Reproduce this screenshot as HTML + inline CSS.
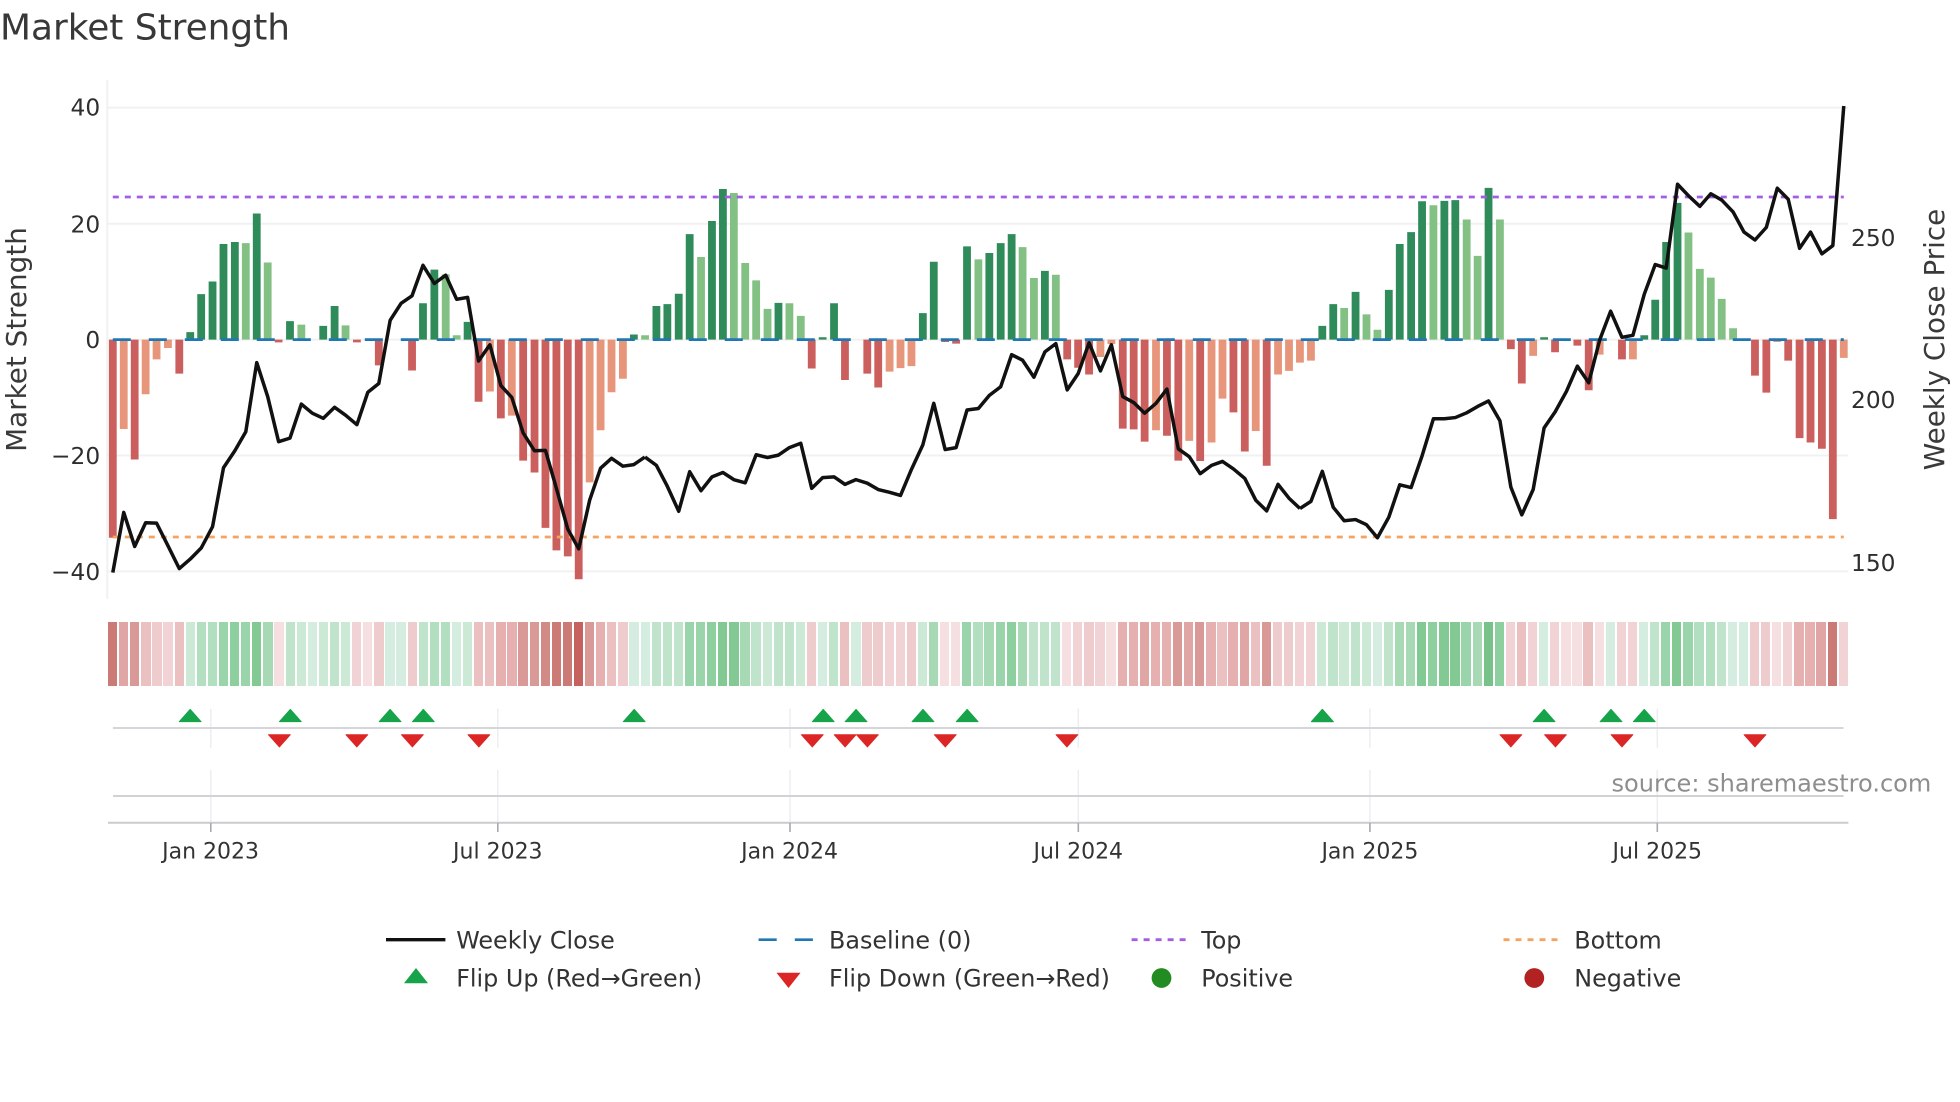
<!DOCTYPE html>
<html lang="en"><head><meta charset="utf-8"><title>Market Strength</title>
<style>
html,body{margin:0;padding:0;background:#fff;width:1960px;height:1102px;overflow:hidden}
#root{position:relative;width:1960px;height:1102px}
svg{position:absolute;left:0;top:0}
svg path{vector-effect:non-scaling-stroke}
text{font-family:"DejaVu Sans","Liberation Sans",sans-serif;fill:#333}
.ax{font-size:23.3px;fill:#2e2e2e}
.tk{font-size:22px;fill:#333;text-anchor:middle}
.lg{font-size:23.85px;fill:#333}
.ti{font-size:27.8px;fill:#3a3a3a;text-anchor:middle}
.br{fill:none;stroke-width:7.8}
#strip{position:absolute;left:108px;top:622px;height:64px;display:flex;width:1770px}
#strip i{display:block;flex:none;width:9.25px;height:64px;margin-right:1.85px}
.r1{background:#f6dfe1}.r2{background:#f2d3d5}.r3{background:#eecbcd}.r4{background:#ebc0c1}.r5{background:#e6b0b0}.r6{background:#e0a6a5}.r7{background:#d99a97}.r8{background:#d28a87}.r9{background:#cc7a76}.r10{background:#c5625f}
.g1{background:#d5ece0}.g2{background:#cce9d5}.g3{background:#bfe4cb}.g4{background:#b2dfc0}.g5{background:#a6d9b4}.g6{background:#9ad4aa}.g7{background:#8ecfa0}.g8{background:#82c994}.g9{background:#76c288}.g10{background:#6bbb7e}
</style></head><body><div id="root">
<div id="strip"><i class=r9></i><i class=r6></i><i class=r7></i><i class=r4></i><i class=r3></i><i class=r2></i><i class=r4></i><i class=g2></i><i class=g4></i><i class=g4></i><i class=g6></i><i class=g7></i><i class=g6></i><i class=g8></i><i class=g5></i><i class=r1></i><i class=g3></i><i class=g2></i><i class=g1></i><i class=g2></i><i class=g3></i><i class=g2></i><i class=r2></i><i class=r1></i><i class=r3></i><i class=g1></i><i class=g1></i><i class=r3></i><i class=g3></i><i class=g4></i><i class=g4></i><i class=g1></i><i class=g2></i><i class=r4></i><i class=r4></i><i class=r5></i><i class=r5></i><i class=r7></i><i class=r7></i><i class=r8></i><i class=r9></i><i class=r9></i><i class=r10></i><i class=r7></i><i class=r5></i><i class=r4></i><i class=r3></i><i class=g1></i><i class=g1></i><i class=g3></i><i class=g3></i><i class=g3></i><i class=g6></i><i class=g6></i><i class=g7></i><i class=g8></i><i class=g8></i><i class=g5></i><i class=g3></i><i class=g2></i><i class=g3></i><i class=g3></i><i class=g2></i><i class=r3></i><i class=g1></i><i class=g3></i><i class=r4></i><i class=g1></i><i class=r3></i><i class=r3></i><i class=r2></i><i class=r2></i><i class=r3></i><i class=g2></i><i class=g5></i><i class=r1></i><i class=r1></i><i class=g6></i><i class=g4></i><i class=g5></i><i class=g6></i><i class=g7></i><i class=g5></i><i class=g3></i><i class=g3></i><i class=g3></i><i class=r1></i><i class=r2></i><i class=r3></i><i class=r2></i><i class=r1></i><i class=r5></i><i class=r5></i><i class=r6></i><i class=r5></i><i class=r5></i><i class=r7></i><i class=r6></i><i class=r7></i><i class=r5></i><i class=r4></i><i class=r5></i><i class=r6></i><i class=r4></i><i class=r7></i><i class=r3></i><i class=r3></i><i class=r2></i><i class=r2></i><i class=g2></i><i class=g3></i><i class=g2></i><i class=g3></i><i class=g2></i><i class=g1></i><i class=g3></i><i class=g5></i><i class=g5></i><i class=g8></i><i class=g7></i><i class=g8></i><i class=g8></i><i class=g6></i><i class=g5></i><i class=g9></i><i class=g7></i><i class=r2></i><i class=r4></i><i class=r2></i><i class=g1></i><i class=r2></i><i class=r1></i><i class=r1></i><i class=r4></i><i class=r1></i><i class=g1></i><i class=r2></i><i class=r2></i><i class=g1></i><i class=g3></i><i class=g6></i><i class=g8></i><i class=g6></i><i class=g4></i><i class=g4></i><i class=g3></i><i class=g1></i><i class=g1></i><i class=r3></i><i class=r3></i><i class=r1></i><i class=r2></i><i class=r5></i><i class=r5></i><i class=r6></i><i class=r9></i><i class=r2></i></div>
<svg width="1960" height="1102" viewBox="0 0 1960 1102" xmlns="http://www.w3.org/2000/svg">
<!-- gridlines -->
<path d="M107.3 80V599" stroke="#f0f1f3" stroke-width="2" fill="none"/>
<path d="M107 107.6H1848M107 223.8H1848M107 339.6H1848M107 455.5H1848M107 571.4H1848" stroke="#f0f1f3" stroke-width="2" fill="none"/>

<!-- bars zoom1 -->
<g transform="scale(.42088,.39541)">
<path class="br" stroke="#cb5f5e" d="M268 859V1360M320 859V1162M426 859V945M662 859V866M848 859V866M900 859V924M979 859V937M1137 859V1016M1190 859V1058M1243 859V1165M1270 859V1195M1296 859V1335M1322 859V1392M1349 859V1407M1375 859V1465"/>
<path class="br" stroke="#e8967b" d="M294 859V1085M346 859V997M372 859V909M399 859V880M1164 859V990M1216 859V1051M1401 859V1220M1427 859V1088M1453 859V992M1480 859V958"/>
<path class="br" stroke="#2f8b59" d="M452 859V840M478 859V744M505 859V712M531 859V617M558 859V612M610 859V540M689 859V812M768 859V824M795 859V774M1005 859V767M1032 859V682M1111 859V814M1506 859V846"/>
<path class="br" stroke="#82c084" d="M584 859V615M636 859V664M716 859V821M821 859V823M1059 859V694M1085 859V848"/>
</g>
<g transform="translate(640,0) scale(.42088,.39541)">
<path class="br" stroke="#2f8b59" d="M39 859V774M65 859V769M92 859V743M118 859V592M171 859V559M197 859V478M329 859V766M434 859V853M461 859V767M672 859V792M698 859V662M777 859V623M830 859V640M857 859V615M883 859V592M962 859V685"/>
<path class="br" stroke="#82c084" d="M12 859V848M145 859V650M223 859V488M250 859V665M276 859V709M303 859V781M355 859V767M382 859V799M804 859V656M909 859V625M936 859V703M988 859V695"/>
<path class="br" stroke="#cb5f5e" d="M408 859V932M487 859V961M540 859V945M566 859V980M725 859V865M751 859V869M1015 859V909M1041 859V930M1067 859V947M1147 859V1084M1173 859V1086M1199 859V1117M1252 859V1102M1279 859V1165M1331 859V1166M1410 859V1043M1437 859V1142M1489 859V1178"/>
<path class="br" stroke="#e8967b" d="M593 859V940M619 859V931M645 859V926M1094 859V903M1120 859V870M1226 859V1088M1305 859V1115M1358 859V1119M1384 859V1008M1463 859V1090M1516 859V947M1542 859V938M1568 859V917"/>
</g>
<g transform="translate(1300,0) scale(.42088,.39541)">
<path class="br" stroke="#2f8b59" d="M53 859V824M79 859V769M132 859V738M211 859V733M237 859V617M264 859V587M290 859V509M343 859V508M369 859V506M448 859V475M580 859V853M818 859V848M844 859V758M870 859V612M897 859V513"/>
<path class="br" stroke="#82c084" d="M105 859V779M158 859V795M184 859V834M317 859V519M396 859V555M422 859V647M475 859V555M923 859V588M950 859V680M976 859V702M1002 859V756M1029 859V830"/>
<path class="br" stroke="#cb5f5e" d="M501 859V883M527 859V970M606 859V891M659 859V874M686 859V987M765 859V909M1081 859V950M1108 859V993M1160 859V912M1187 859V1108M1213 859V1119M1240 859V1135M1266 859V1313"/>
<path class="br" stroke="#e8967b" d="M26 859V912M554 859V900M712 859V897M791 859V909M1134 859V865M1292 859V905"/>
</g>

<!-- reference lines -->
<path d="M112.8 339.6H1843.8" stroke="#1f77b4" stroke-width="2.8" stroke-dasharray="18 18" fill="none"/>
<path d="M112.8 197H1843.8" stroke="#a45ee5" stroke-width="2.8" stroke-dasharray="6 6" fill="none"/>
<path d="M112.8 537H1843.8" stroke="#f4a460" stroke-width="2.8" stroke-dasharray="6 6" fill="none"/>

<!-- price line -->
<g fill="none" stroke="#111" stroke-width="3.5" stroke-linejoin="round" stroke-linecap="butt">
<path transform="scale(.42088,.39541)" d="M268 1448L294 1296L320 1382L346 1322L372 1323L399 1380L426 1438L452 1414L478 1386L505 1332L531 1183L558 1140L584 1092L610 917L636 1003L662 1117L689 1108L716 1022L742 1045L768 1058L795 1030L821 1050L848 1074L874 992L900 970L927 810L953 767L979 748L1005 671L1032 717L1059 696L1085 757L1111 752L1137 913L1164 872L1190 975L1216 1005L1243 1095L1270 1140L1296 1139L1322 1235L1349 1338L1375 1388L1401 1265L1427 1184L1453 1159L1480 1179L1506 1175L1532 1156"/>
<path transform="translate(640,0) scale(.42088,.39541)" d="M12 1156L39 1177L65 1230L92 1293L118 1193L145 1241L171 1206L197 1195L223 1213L250 1221L276 1150L303 1157L329 1151L355 1132L382 1121L408 1235L434 1208L461 1206L487 1225L513 1213L540 1222L566 1238L593 1245L619 1253L645 1187L672 1125L698 1020L725 1137L751 1132L777 1037L804 1033L830 1000L857 978L883 897L909 911L936 954L962 890L988 869L1015 986L1041 945L1067 867L1094 938L1120 872L1147 1003L1173 1018L1199 1045L1226 1020L1252 984L1279 1135L1305 1155L1331 1198L1358 1177L1384 1167L1410 1186L1437 1210L1463 1265L1489 1292L1516 1225L1542 1260L1568 1286"/>
<path transform="translate(1300,0) scale(.42088,.39541)" d="M0 1286L26 1268L53 1192L79 1283L105 1317L132 1314L158 1327L184 1360L211 1308L237 1226L264 1233L290 1153L317 1059L343 1059L369 1056L396 1044L422 1028L448 1014L475 1064L501 1232L527 1302L554 1238L580 1082L606 1042L633 990L659 926L686 968L712 860L738 787L765 853L791 848L818 744L844 669L870 678L897 466L923 495L950 522L976 490L1002 506L1029 536L1055 587L1081 607L1108 575L1134 476L1160 504L1187 628L1213 587L1240 642L1266 621L1292 268"/>
</g>

<!-- flip rows: grid -->
<path d="M210.8 708.7V747.7M497.8 708.7V747.7M790 708.7V747.7M1078.3 708.7V747.7M1369.9 708.7V747.7M1657.3 708.7V747.7M210.8 770V822M497.8 770V822M790 770V822M1078.3 770V822M1369.9 770V822M1657.3 770V822" stroke="#eceef1" stroke-width="1.5" fill="none"/>
<path d="M113 728H1843.5" stroke="#d4d6da" stroke-width="2" fill="none"/>
<path d="M113 796H1843.5" stroke="#d2d2d4" stroke-width="2" fill="none"/>
<path d="M108 822.7H1848.4" stroke="#cbcbcf" stroke-width="2" fill="none"/>
<path d="M210.8 823V832M497.8 823V832M790 823V832M1078.3 823V832M1369.9 823V832M1657.3 823V832" stroke="#a9a9ad" stroke-width="1.6" fill="none"/>

<!-- triangles -->
<g transform="translate(90,610) scale(.42088,.33333)" stroke-width=".9" stroke-linejoin="round">
<path fill="#16a34a" stroke="#16a34a" d="M238 298l26 37h-52zM476 298l26 37h-52zM713 298l26 37h-52zM792 298l26 37h-52zM1293 298l26 37h-52z"/>
<path fill="#dc2626" stroke="#dc2626" d="M450 411l26-37h-52zM634 411l26-37h-52zM766 411l26-37h-52zM924 411l26-37h-52z"/>
</g>
<g transform="translate(750,610) scale(.42088,.33333)" stroke-width=".9" stroke-linejoin="round">
<path fill="#16a34a" stroke="#16a34a" d="M174 298l26 37h-52zM252 298l26 37h-52zM411 298l26 37h-52zM516 298l26 37h-52zM1360 298l26 37h-52z"/>
<path fill="#dc2626" stroke="#dc2626" d="M148 411l26-37h-52zM226 411l26-37h-52zM279 411l26-37h-52zM464 411l26-37h-52zM753 411l26-37h-52z"/>
</g>
<g transform="translate(1300,610) scale(.42088,.33333)" stroke-width=".9" stroke-linejoin="round">
<path fill="#16a34a" stroke="#16a34a" d="M53 298l26 37h-52zM580 298l26 37h-52zM739 298l26 37h-52zM818 298l26 37h-52z"/>
<path fill="#dc2626" stroke="#dc2626" d="M501 411l26-37h-52zM607 411l26-37h-52zM765 411l26-37h-52zM1081 411l26-37h-52z"/>
</g>

<!-- text -->
<text x="0" y="39.5" style="font-size:35.9px;fill:#383838">Market Strength</text>
<text class="ax" text-anchor="end" x="100.2" y="115.5">40</text>
<text class="ax" text-anchor="end" x="100.2" y="232.5">20</text>
<text class="ax" text-anchor="end" x="100.2" y="348">0</text>
<text class="ax" text-anchor="end" x="100.2" y="463.8">−20</text>
<text class="ax" text-anchor="end" x="100.2" y="580">−40</text>
<text class="ax" x="1851" y="246">250</text>
<text class="ax" x="1851" y="408">200</text>
<text class="ax" x="1851" y="571">150</text>
<text class="ti" transform="translate(26,339.5) rotate(-90)">Market Strength</text>
<text class="ti" transform="translate(1944,339.5) rotate(-90)">Weekly Close Price</text>
<text class="tk" x="210.6" y="858.3">Jan 2023</text>
<text class="tk" x="497.8" y="858.3">Jul 2023</text>
<text class="tk" x="789.6" y="858.3">Jan 2024</text>
<text class="tk" x="1078.3" y="858.3">Jul 2024</text>
<text class="tk" x="1369.9" y="858.3">Jan 2025</text>
<text class="tk" x="1657.3" y="858.3">Jul 2025</text>
<text x="1611.5" y="791.7" style="font-size:24.05px;fill:#8e8e8e">source: sharemaestro.com</text>

<!-- legend -->
<path d="M386 939.7H445.4" stroke="#111" stroke-width="3.4" fill="none"/>
<path d="M758.6 939.7H776.7M794.8 939.7H812.9" stroke="#1f77b4" stroke-width="2.6" fill="none"/>
<path d="M1131.6 939.7H1186" stroke="#a45ee5" stroke-width="2.8" stroke-dasharray="6 6" fill="none"/>
<path d="M1503.5 939.7H1558.8" stroke="#f4a460" stroke-width="2.8" stroke-dasharray="6 6" fill="none"/>
<path fill="#16a34a" d="M416 968l12 15.3h-24z"/>
<path fill="#dc2626" d="M788.5 988l12-15.3h-24z"/>
<circle cx="1161.5" cy="978" r="9.9" fill="#228b22"/>
<circle cx="1534.3" cy="978" r="9.9" fill="#b22222"/>
<text class="lg" x="456.2" y="948.3">Weekly Close</text>
<text class="lg" x="829" y="948.3">Baseline (0)</text>
<text class="lg" x="1201.2" y="948.3">Top</text>
<text class="lg" x="1574.3" y="948.3">Bottom</text>
<text class="lg" x="456.2" y="986.7">Flip Up (Red→Green)</text>
<text class="lg" x="829" y="986.7">Flip Down (Green→Red)</text>
<text class="lg" x="1201.2" y="986.7">Positive</text>
<text class="lg" x="1574.3" y="986.7">Negative</text>
</svg>
</div></body></html>
